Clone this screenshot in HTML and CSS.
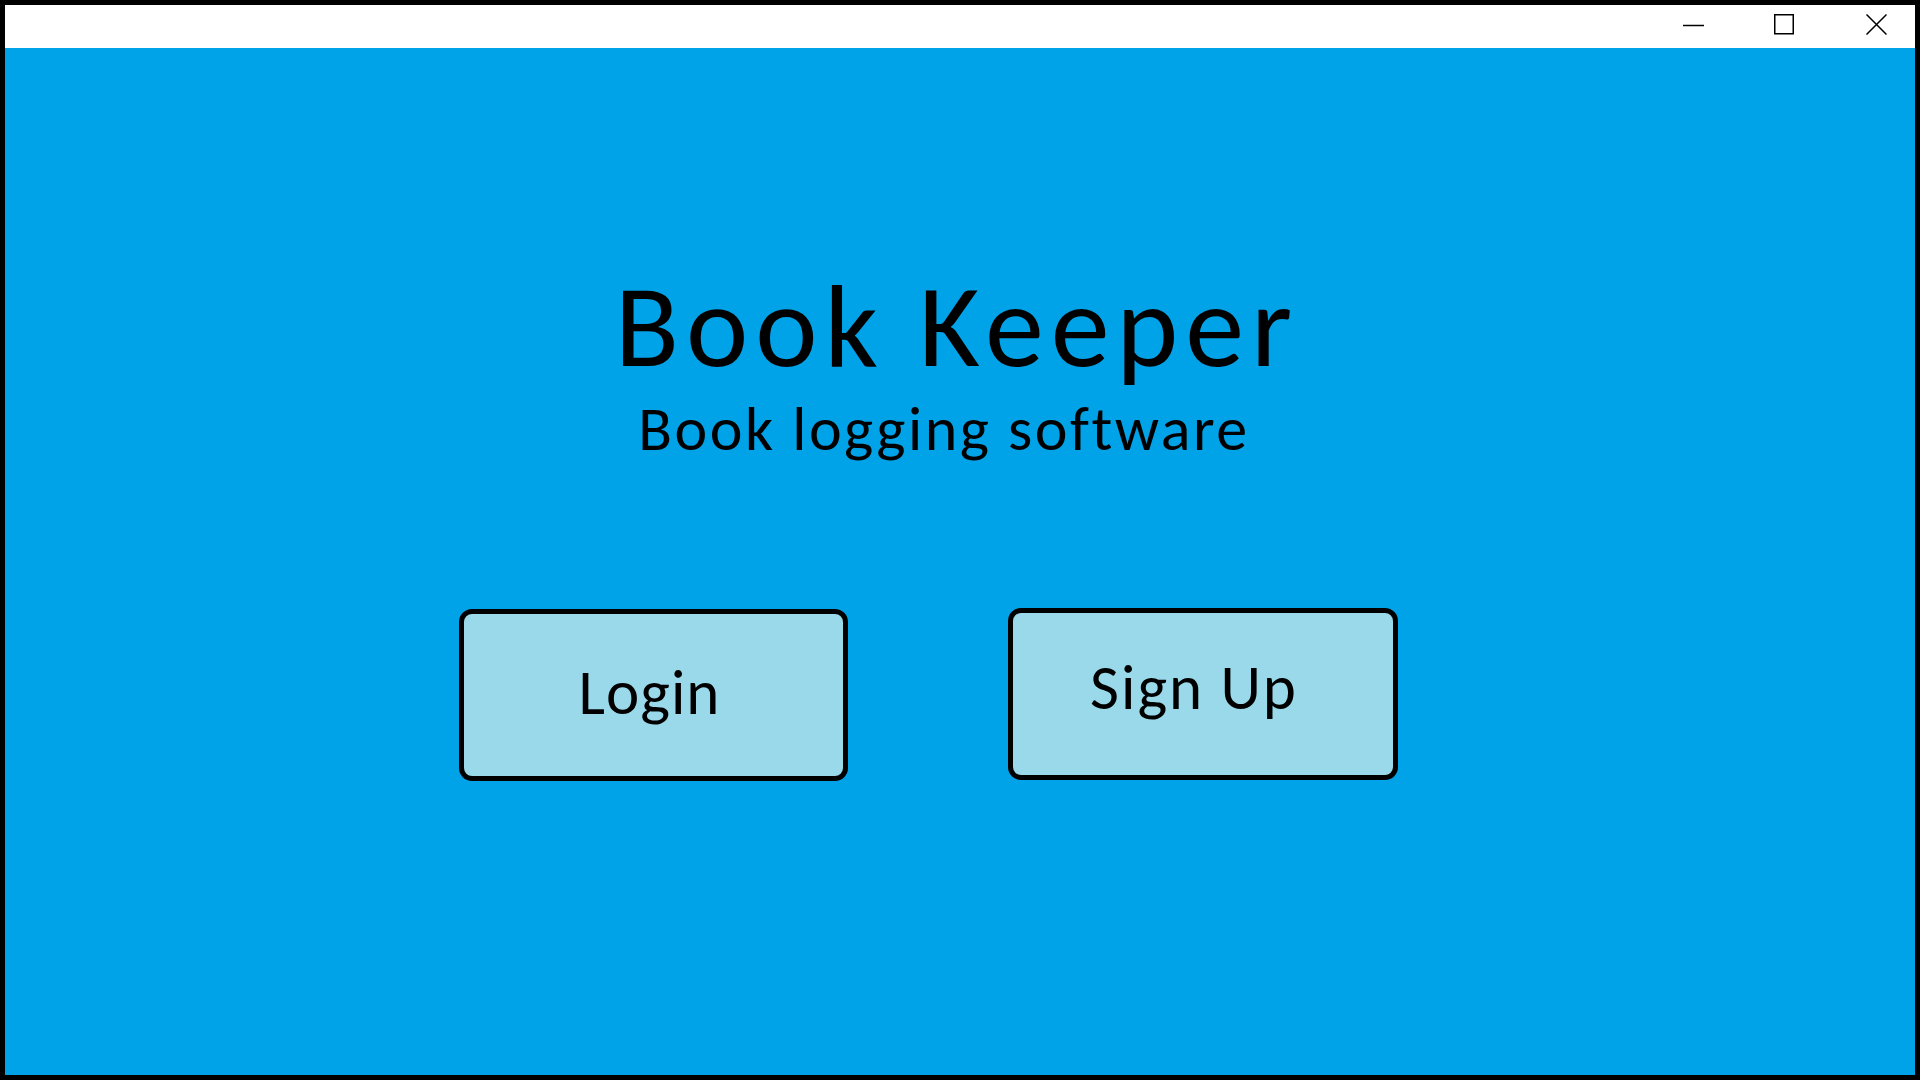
FILE: index.html
```html
<!DOCTYPE html>
<html>
<head>
<meta charset="utf-8">
<link rel="stylesheet" href="styles.css">
</head>
<body>
<div class="window">
  <div class="titlebar">
    <div class="controls">
      <svg class="ctl" width="21" height="21" viewBox="0 0 21 21"><line x1="0" y1="11.5" x2="21" y2="11.5" stroke="#000" stroke-width="1.5"/></svg>
      <svg class="ctl ctl-max" width="20" height="21" viewBox="0 0 20 21"><rect x="0.75" y="0.75" width="18.5" height="19" fill="none" stroke="#000" stroke-width="1.5"/></svg>
      <svg class="ctl" width="21" height="21" viewBox="0 0 21 21"><path d="M0.5 0.5 L20.5 20.5 M20.5 0.5 L0.5 20.5" stroke="#000" stroke-width="1.5" fill="none"/></svg>
    </div>
  </div>
  <main class="content">
    <div class="heading">
      <h1 class="title">Book Keeper</h1>
      <p class="subtitle">Book logging software</p>
    </div>
    <div class="actions">
      <button class="btn btn-login">Login</button>
      <button class="btn btn-signup">Sign Up</button>
    </div>
  </main>
</div>
</body>
</html>
```
FILE: styles.css
```css
html, body {
  margin: 0;
  padding: 0;
}
body {
  width: 1920px;
  height: 1080px;
  overflow: hidden;
  font-family: "Carlito", "Lato", "Open Sans", sans-serif;
}
.window {
  box-sizing: border-box;
  width: 1920px;
  height: 1080px;
  border: 5px solid #000;
  display: flex;
  flex-direction: column;
  background: #00a2e8;
}
.titlebar {
  height: 43px;
  background: #fff;
  display: flex;
  justify-content: flex-end;
  align-items: flex-start;
  flex-shrink: 0;
}
.controls {
  display: flex;
  align-items: flex-start;
  padding: 9px 28px 0 0;
}
.ctl {
  display: block;
}
.ctl-max {
  margin: 0 72px 0 70px;
}
.content {
  flex: 1;
  display: flex;
  flex-direction: column;
  align-items: flex-start;
  padding-top: 219px;
}
.heading {
  width: 800px;
  margin-left: 552px;
  text-align: center;
  white-space: nowrap;
}
.title {
  margin: 0;
  font-weight: normal;
  font-size: 118px;
  line-height: 118px;
  letter-spacing: 7px;
  color: #000;
}
.subtitle {
  margin: 13px 0 0 0;
  padding-right: 26px;
  font-size: 62px;
  line-height: 62px;
  letter-spacing: 2.5px;
  color: #000;
}
.actions {
  display: flex;
  gap: 160px;
  margin-left: 454px;
  margin-top: 149px;
}
.btn {
  box-sizing: border-box;
  width: 389px;
  height: 172px;
  border: 5px solid #000;
  border-radius: 13px;
  background: #99d9ea;
  font-family: inherit;
  font-size: 63px;
  line-height: 63px;
  color: #000;
  padding: 0;
  display: flex;
  align-items: center;
  justify-content: center;
  white-space: nowrap;
}
.btn-login {
  padding: 0 8px 5px 0;
  letter-spacing: 1px;
}
.btn-signup {
  width: 390px;
  margin-top: -1px;
  padding: 0 18px 14px 0;
  letter-spacing: 2px;
}
```
